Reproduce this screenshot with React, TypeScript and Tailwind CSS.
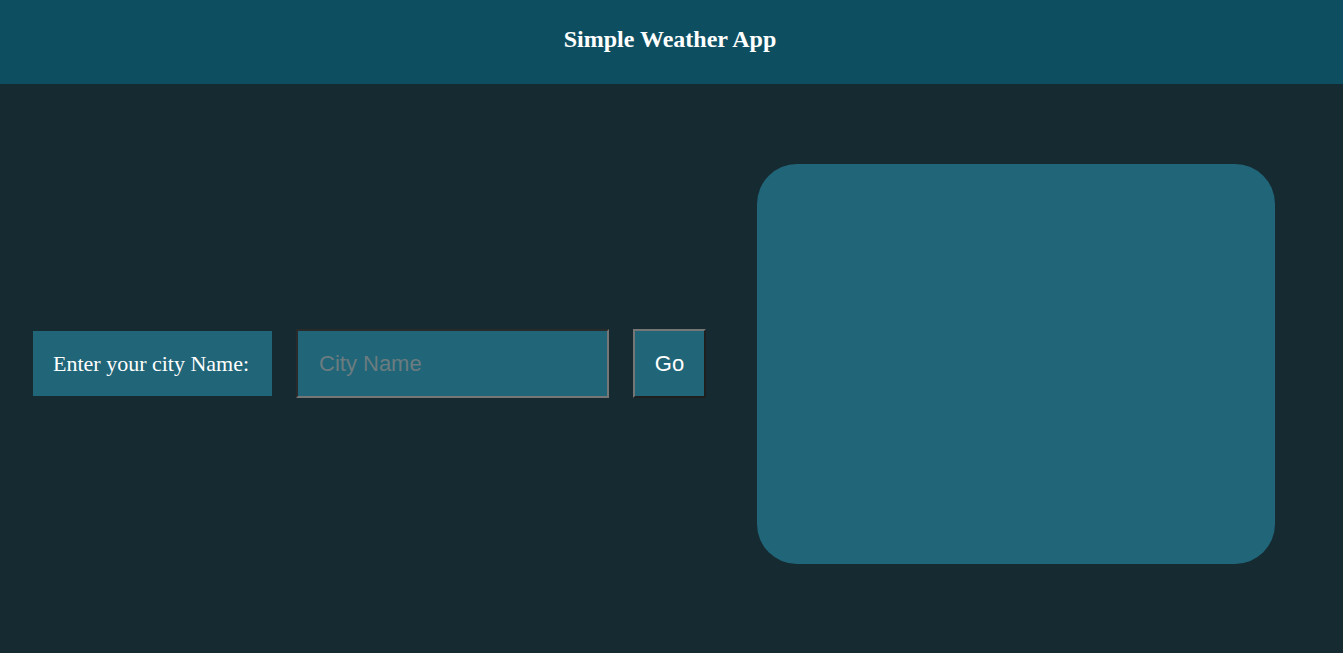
export default function App() {
  return (
    <div className="min-h-[653px] bg-[#162a32] font-['Liberation_Serif',serif]">
      <header className="flex h-[84px] items-center justify-center bg-[#0d4f61] pb-[6px] pr-[3px]">
        <h1 className="text-[24px] font-bold leading-none text-white">Simple Weather App</h1>
      </header>

      <main className="flex items-center pl-[33px] pt-[80px]">
        <div className="flex items-center pb-[1px]">
          <label className="flex h-[65px] w-[239px] items-center bg-[#216578] pl-[20px] text-[22px] text-white">
            Enter your city Name:
          </label>
          <input
            type="text"
            placeholder="City Name"
            className="ml-[24px] h-[69px] w-[313px] border-2 border-b-[#767676] border-l-[#2a2a2a] border-r-[#767676] border-t-[#2a2a2a] bg-[#216578] pl-[21px] font-['Liberation_Sans',sans-serif] text-[22px] text-white outline-none placeholder:text-[#6b7c80]"
          />
          <button className="ml-[24px] h-[69px] w-[73px] border-2 border-b-[#1f1f1f] border-l-[#767676] border-r-[#1f1f1f] border-t-[#767676] bg-[#216578] font-['Liberation_Sans',sans-serif] text-[22px] text-white">
            Go
          </button>
        </div>

        <section className="ml-[51px] h-[400px] w-[518px] rounded-[40px] bg-[#216578]" />
      </main>
    </div>
  );
}
